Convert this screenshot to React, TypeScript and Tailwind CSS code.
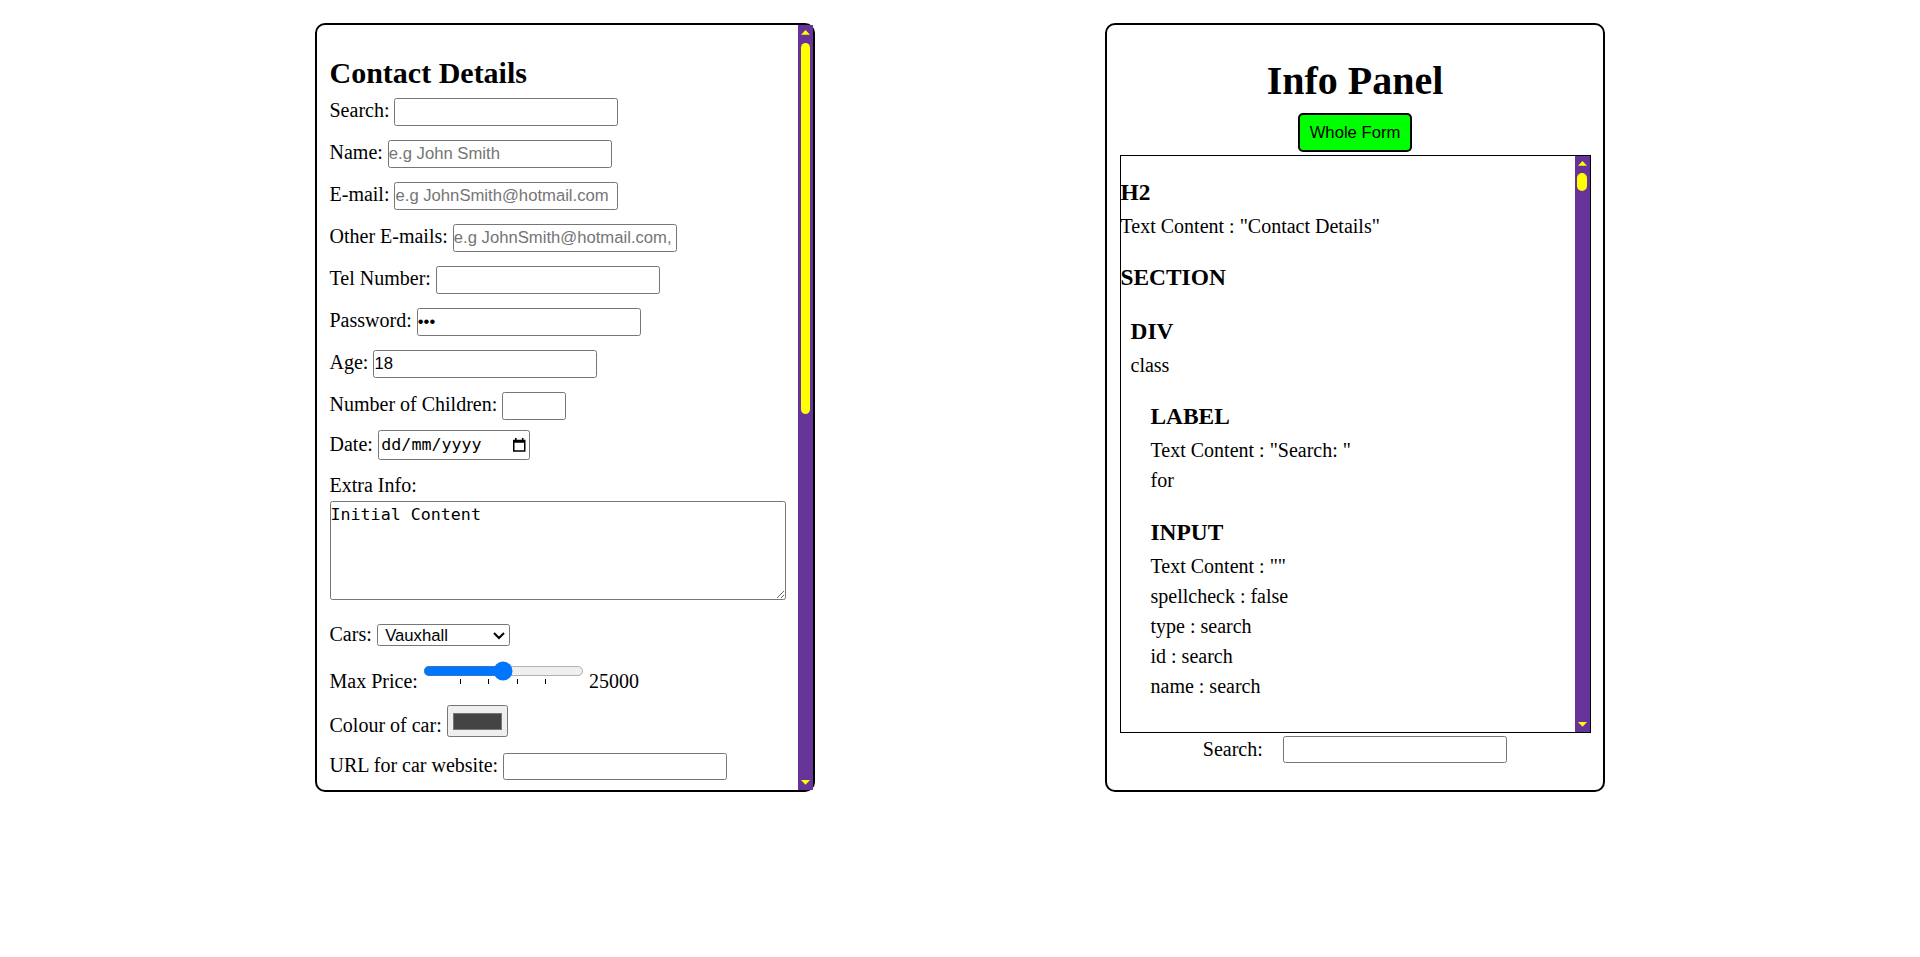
import React from "react";

type TreeNode = { tag: string; d: number; a: string[]; gap?: string };

const tree: TreeNode[] = [
  { tag: "H2", d: 0, a: ['Text Content : "Contact Details"'] },
  { tag: "SECTION", d: 0, a: [], gap: "mb-[21.2px]" },
  { tag: "DIV", d: 1, a: ["class"] },
  { tag: "LABEL", d: 2, a: ['Text Content : "Search: "', "for"] },
  {
    tag: "INPUT",
    d: 2,
    a: ['Text Content : ""', "spellcheck : false", "type : search", "id : search", "name : search"],
  },
];

const indent = ["pl-0", "pl-[8px]", "pl-[24px]", "pl-[48px]"];

const txt =
  "h-[22px] w-[179.2px] rounded-[2px] border border-[#767676] bg-white px-0 align-baseline font-['Liberation_Sans',Arial,sans-serif] text-[13.333px] leading-[normal] text-black outline-none placeholder:text-[#757575]";

function CalendarIcon() {
  return (
    <svg width="10" height="11" viewBox="0 0 10 11" className="ml-auto mr-[3px]">
      <rect x="1.6" y="0" width="1.3" height="1.6" fill="#000" />
      <rect x="7.1" y="0" width="1.3" height="1.6" fill="#000" />
      <path fillRule="evenodd" d="M0 1.3h10V11H0zM1.2 3.8v6h7.6v-6z" fill="#000" />
    </svg>
  );
}

function Scrollbar({ thumb }: { thumb: string }) {
  return (
    <div className="flex w-[12px] shrink-0 flex-col bg-[#663399]">
      <div className="flex h-[12px] items-center justify-center">
        <svg width="7.2" height="3.8" viewBox="0 0 7.2 3.8">
          <path d="M3.6 0L7.2 3.8H0z" fill="#ffff00" />
        </svg>
      </div>
      <div className="flex-1 px-[2.3px] pt-[2px]">
        <div className={`rounded-full bg-[#ffff00] ${thumb}`} />
      </div>
      <div className="flex h-[12px] items-center justify-center">
        <svg width="7.2" height="3.8" viewBox="0 0 7.2 3.8">
          <path d="M0 0H7.2L3.6 3.8z" fill="#ffff00" />
        </svg>
      </div>
    </div>
  );
}

export default function App() {
  return (
    <div className="bg-white text-black [zoom:1.25] font-['Liberation_Serif','Times_New_Roman',serif] text-[16px] leading-[normal]">
      <div className="flex justify-center gap-[232px] pt-[18.4px]">
        {/* Left panel */}
        <div className="flex h-[615.2px] w-[400px] rounded-[8px] border-2 border-black">
          <div className="min-w-0 flex-1 overflow-hidden px-[10px]">
            <h2 className="mt-[24.4px] text-[24px] font-bold leading-[normal]">Contact Details</h2>
            <form className="mt-[7px] flex flex-col gap-[11.6px]">
              <div>
                <label htmlFor="search">Search: </label>
                <input id="search" type="search" spellCheck={false} className={txt} />
              </div>
              <div>
                <label htmlFor="name">Name: </label>
                <input id="name" type="text" placeholder="e.g John Smith" className={txt} />
              </div>
              <div>
                <label htmlFor="email">E-mail: </label>
                <input id="email" type="email" placeholder="e.g JohnSmith@hotmail.com" className={txt} />
              </div>
              <div>
                <label htmlFor="emails">Other E-mails: </label>
                <input
                  id="emails"
                  type="email"
                  multiple
                  placeholder="e.g JohnSmith@hotmail.com, JaneSmith@hotmail.com"
                  className={txt}
                />
              </div>
              <div>
                <label htmlFor="tel">Tel Number: </label>
                <input id="tel" type="tel" className={txt} />
              </div>
              <div>
                <label htmlFor="password">Password: </label>
                <input id="password" type="password" defaultValue="abc" className={txt} />
              </div>
              <div>
                <label htmlFor="age">Age: </label>
                <input id="age" type="text" defaultValue="18" className={txt} />
              </div>
              <div>
                <label htmlFor="children">Number of Children: </label>
                <input
                  id="children"
                  type="number"
                  className="h-[22px] w-[50.7px] rounded-[2px] border border-[#767676] bg-white px-0 align-baseline font-['Liberation_Sans',Arial,sans-serif] text-[13.333px] leading-[normal] outline-none"
                />
              </div>
              <div className="-mt-[3.5px]">
                <label htmlFor="date">Date: </label>
                <span
                  id="date"
                  className="inline-flex h-[24px] w-[122px] items-center rounded-[2px] border border-[#767676] bg-white pl-[2px] align-baseline font-['DejaVu_Sans_Mono',monospace] text-[13.333px] leading-[normal]"
                >
                  <span>dd/mm/yyyy</span>
                  <CalendarIcon />
                </span>
              </div>
              <div>
                <label htmlFor="extra" className="block">
                  Extra Info:
                </label>
                <textarea
                  id="extra"
                  defaultValue="Initial Content"
                  className="mt-[3px] block h-[79.2px] w-full rounded-[2px] border border-[#767676] bg-white px-0 pt-[2px] font-['DejaVu_Sans_Mono',monospace] text-[13.333px] leading-[normal] outline-none"
                />
              </div>
              <div className="mt-[6.4px]">
                <label htmlFor="cars">Cars: </label>
                <select
                  id="cars"
                  defaultValue="vauxhall"
                  className="h-[18px] w-[107px] rounded-[2px] border border-[#767676] bg-white pl-[2px] align-baseline font-['Liberation_Sans',Arial,sans-serif] text-[13.333px] leading-[normal] text-black"
                >
                  <option value="vauxhall">Vauxhall</option>
                  <option value="ford">Ford</option>
                  <option value="bmw">BMW</option>
                  <option value="audi">Audi</option>
                </select>
              </div>
              <div className="-mt-[4.8px]">
                <label htmlFor="price">Max Price: </label>
                <input
                  id="price"
                  type="range"
                  min={0}
                  max={50000}
                  step={5000}
                  defaultValue={25000}
                  list="prices"
                  className="my-[2px] w-[129px] align-[2px]"
                />
                <datalist id="prices">
                  <option value="10000" />
                  <option value="20000" />
                  <option value="30000" />
                  <option value="40000" />
                </datalist>{" "}
                25000
              </div>
              <div className="-mt-[1px]">
                <label htmlFor="colour">Colour of car: </label>
                <input
                  id="colour"
                  type="color"
                  defaultValue="#444444"
                  className="h-[25.6px] w-[49.4px] rounded-[2px] border border-[#767676] bg-[#efefef] px-[2px] py-[1px] align-[1.5px]"
                />
              </div>
              <div className="mt-[0.8px]">
                <label htmlFor="url">URL for car website: </label>
                <input id="url" type="url" className={txt} />
              </div>
            </form>
          </div>
          <Scrollbar thumb="h-[297px]" />
        </div>

        {/* Right panel */}
        <div className="flex h-[615.2px] w-[400px] flex-col rounded-[8px] border-2 border-black px-[10px]">
          <h1 className="mt-[25.7px] text-center text-[32px] font-bold leading-[normal]">Info Panel</h1>
          <div className="mt-[7.2px] flex justify-center">
            <button
              type="button"
              className="h-[31px] w-[91px] rounded-[4px] border-2 border-black bg-[#00ff00] font-['Liberation_Sans',Arial,sans-serif] text-[13.333px] leading-[normal] text-black"
            >
              Whole Form
            </button>
          </div>
          <div className="mt-[2.2px] flex h-[462.4px] border border-black">
            <div className="min-w-0 flex-1 overflow-hidden">
              {tree.map((n, i) => (
                <div key={i} className={indent[n.d]}>
                  <h3 className={`mt-[18.72px] text-[18.72px] font-bold leading-[normal] ${n.gap ?? "mb-[4px]"}`}>
                    {n.tag}
                  </h3>
                  {n.a.map((t, j) => (
                    <div key={j} className="leading-[24px]">
                      {t}
                    </div>
                  ))}
                </div>
              ))}
            </div>
            <Scrollbar thumb="h-[14.4px]" />
          </div>
          <div className="mt-[2.4px] flex items-center justify-center gap-[16.3px]">
            <label htmlFor="infosearch">Search:</label>
            <input id="infosearch" type="text" className={txt} />
          </div>
        </div>
      </div>
    </div>
  );
}
